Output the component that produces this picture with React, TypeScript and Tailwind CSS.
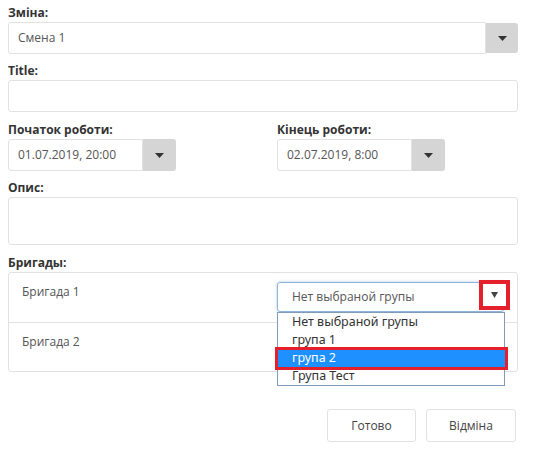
import React from "react";

const font = { fontFamily: '"Open Sans", "Noto Sans", sans-serif' };

function Caret() {
  return (
    <svg width="9" height="5" viewBox="0 0 9 5">
      <path d="M0 0 L9 0 L4.5 5 Z" fill="#333" />
    </svg>
  );
}

function Label({ children }: { children: React.ReactNode }) {
  return (
    <div className="text-[12px] font-bold leading-[16px] text-[#333] mb-[1px]">{children}</div>
  );
}

function DateInput({ value }: { value: string }) {
  return (
    <div className="flex h-[32px]">
      <div className="w-[135px] border border-[#e2e2e2] rounded-l-[3px] flex items-center pl-[9px] text-[12px] text-[#555] bg-white">
        {value}
      </div>
      <div className="w-[33px] bg-[#d5d5d5] rounded-r-[3px] flex items-center justify-center">
        <Caret />
      </div>
    </div>
  );
}

export default function App() {
  return (
    <div className="w-[536px] h-[456px] bg-white pl-[8px] pr-[18px] pt-[5px]" style={font}>
      <Label>Зміна:</Label>
      <div className="flex h-[32px]">
        <div className="flex-1 border border-[#e2e2e2] rounded-l-[3px] flex items-center pl-[9px] text-[12px] text-[#555]">
          Смена 1
        </div>
        <div className="w-[32px] my-[1px] bg-[#d5d5d5] rounded-r-[3px] flex items-center justify-center">
          <Caret />
        </div>
      </div>

      <div className="mt-[9px]">
        <Label>Title:</Label>
        <div className="h-[32px] border border-[#e2e2e2] rounded-[3px]" />
      </div>

      <div className="mt-[10px] flex">
        <div className="w-[269px]">
          <Label>Початок роботи:</Label>
          <DateInput value="01.07.2019, 20:00" />
        </div>
        <div>
          <Label>Кінець роботи:</Label>
          <DateInput value="02.07.2019, 8:00" />
        </div>
      </div>

      <div className="mt-[9px]">
        <Label>Опис:</Label>
        <div className="h-[48px] border border-[#e2e2e2] rounded-[3px]" />
      </div>

      <div className="mt-[10px]">
        <Label>Бригады:</Label>
        <div className="border border-[#e2e2e2] rounded-[3px] relative">
          <div className="h-[50px] border-b border-[#e2e2e2] flex pl-[13px] pt-[10px] text-[12px] text-[#555]">
            <div className="w-[255px]">Бригада 1</div>
            <div className="relative -mt-[1px]">
              <div className="w-[227px] h-[30px] border border-[#8fb3d9] rounded-[3px] flex items-center pl-[14px] text-[12px] text-[#555] shadow-[0_0_3px_rgba(102,153,204,0.5)]">
                Нет выбраной групы
              </div>
              <div className="absolute left-[202px] top-[-2px] w-[31px] h-[30px] border-[4px] border-[#e3202c] bg-white flex items-center justify-center">
                <svg width="7" height="6" viewBox="0 0 7 6">
                  <path d="M0 0 L7 0 L3.5 6 Z" fill="#444" />
                </svg>
              </div>
              <div className="absolute left-0 top-[30px] w-[228px] border border-[#7f9db9] bg-white text-[12.5px] leading-[18px] text-[#333] z-10" style={{ fontFamily: '"Noto Sans", "Open Sans", sans-serif' }}>
                <div className="pl-[14px] h-[18px]">Нет выбраной групы</div>
                <div className="pl-[14px] h-[18px]">група 1</div>
                <div className="relative h-[18px]">
                  <div className="absolute left-[-3px] right-[-4px] top-[-2px] bottom-[-3px] border-[3px] border-[#e3202c] bg-[#1e90ff]" />
                  <div className="relative pl-[14px] text-white">група 2</div>
                </div>
                <div className="pl-[14px] h-[18px]">Група Тест</div>
              </div>
            </div>
          </div>
          <div className="h-[48px] pl-[13px] pt-[10px] text-[12px] text-[#555]">Бригада 2</div>
        </div>
      </div>

      <div className="mt-[37px] flex justify-end gap-[10px] pr-[2px]">
        <div className="w-[89px] h-[33px] border border-[#e2e2e2] rounded-[3px] flex items-center justify-center text-[12px] text-[#444]">
          Готово
        </div>
        <div className="w-[90px] h-[33px] border border-[#e2e2e2] rounded-[3px] flex items-center justify-center text-[12px] text-[#444]">
          Відміна
        </div>
      </div>
    </div>
  );
}
